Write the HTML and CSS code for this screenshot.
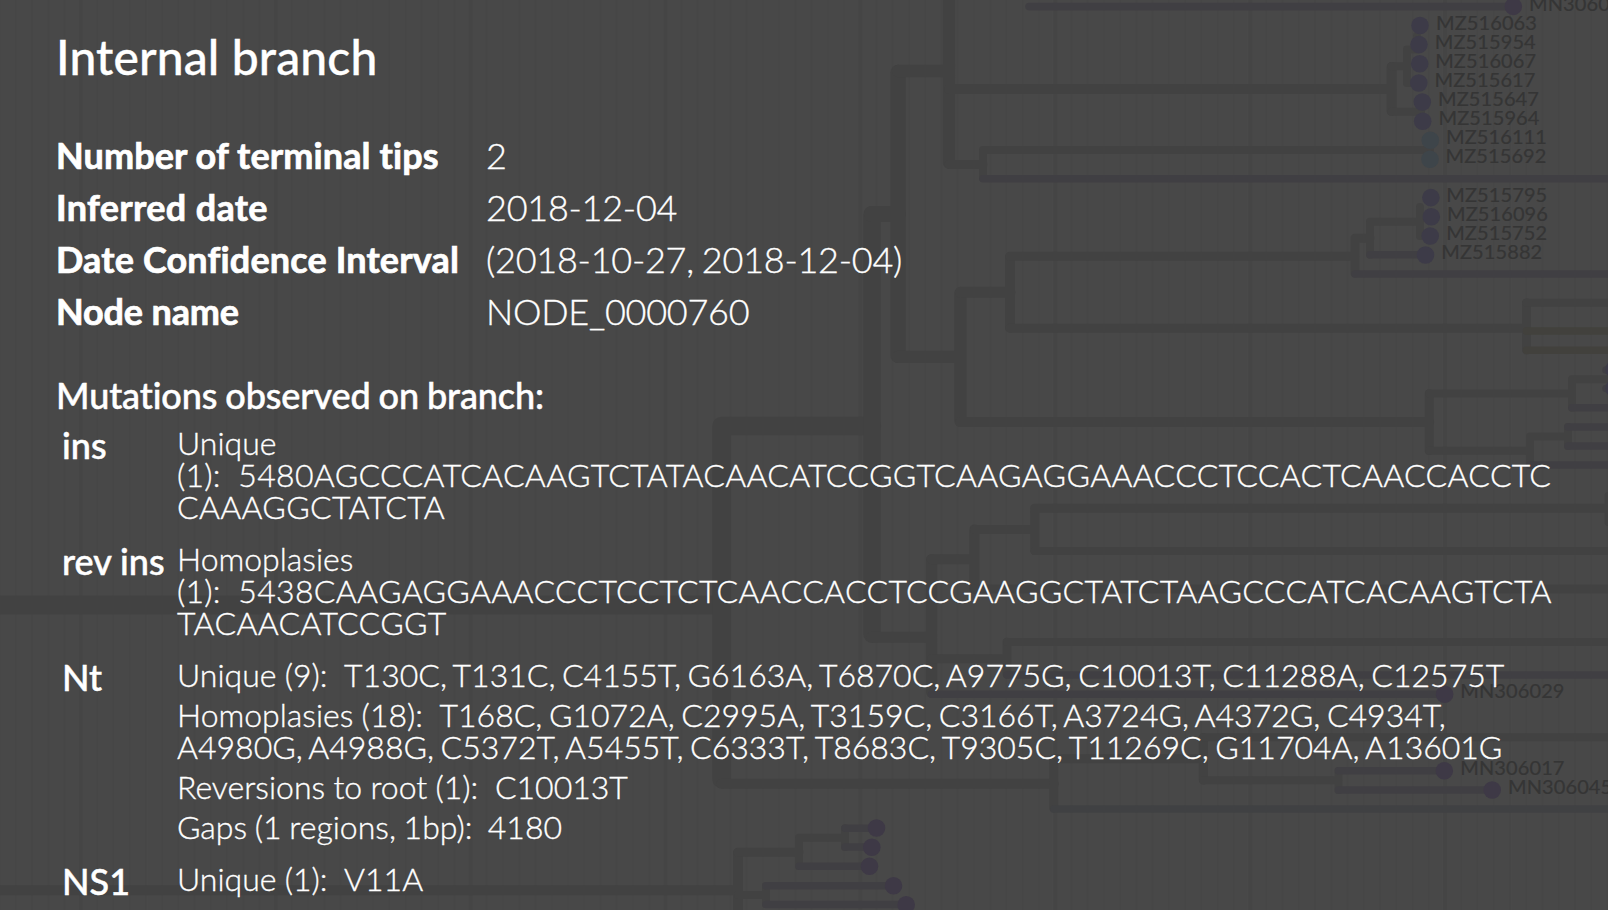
FILE: index.html
```html
<!DOCTYPE html>
<html lang="en">
<head>
<meta charset="utf-8">
<title>Internal branch</title>
<link rel="stylesheet" href="styles.css">
</head>
<body>
<svg class="tree" viewBox="0 0 1608 910" aria-hidden="true">
  <defs>
    <pattern id="grid" x="80.8" y="0" width="194.9" height="910" patternUnits="userSpaceOnUse">
      <path class="minor" d="M16.2 0V910M32.5 0V910M48.7 0V910M65 0V910M81.2 0V910M97.4 0V910M113.7 0V910M129.9 0V910M146.2 0V910M162.4 0V910M178.7 0V910"/>
      <path class="major" d="M0 0V910M194.9 0V910"/>
    </pattern>
  </defs>
  <rect width="1608" height="910" fill="url(#grid)"/>
  <g class="branch">
    <path stroke-width="19" d="M-10 605H721.5"/>
    <path stroke-width="18.5" d="M721.5 426V779M721.5 426H872"/>
    <path stroke-width="17.5" d="M872 214.7V634"/>
    <path stroke-width="16" d="M872 214H898"/>
    <path stroke-width="15.3" d="M898 72.3V355.4"/>
    <path stroke-width="12.3" d="M898 71H949M898 356.8H960.4M949 -10V162.7M960.4 293.3V420.8"/>
    <path stroke-width="11" d="M872 637.2H931.6M931.6 559.7V692.3M960.4 292.3H1010"/>
    <path stroke-width="10" d="M949 89H1391.6M960.4 422H1429.2M1010 257V327.5M931.6 559.3H974.4M974.4 529.6V589M721.5 783.7H1053.7M738 853V930M-10 890.3H738M1391.6 67V111"/>
    <path stroke-width="9" d="M949 164.4H983M1010 256.2H1355M1010 328.3H1526.5M1355 238.2V273M1355 238.2H1370M974.4 529.5H1034.7M974.4 589H1620M931.6 658.7H1007M1034.7 508.3V550.5M1034.7 508.3H1608M1053.7 758.8V808M1053.7 758.8H1203.3M1203.3 737.5V780M1526.5 303V350M1429.2 393.7V450.5M738 852.3H799M1007 642.2V674"/>
    <path stroke-width="8" d="M983 150V178M983 150H1430M1370 221.7V254.8M1370 221.7H1420M1420 207V236M1391.6 66.3H1407M1391.6 111.7H1421M1407 49.5V83H1418M1407 49.5H1417M1417 36V45M1526.5 302.7H1620M1429.2 393.5H1572M1429.2 450.7H1530M1572 379.3V407.7M1572 379.3H1606M1530 436.5V465M1530 436.5H1568M1568 427V446M1034.7 551H1620M1608.5 496V522M1007 642H1620M1203.3 737.3H1620M1203.3 780.3H1338.5M1338.5 771V790M799 837.8V866M799 837.8H845M845 828.3V847M738 895H766M766 886V904"/>
  </g>
  <path class="branch violet" d="M1029 6.6H1513M983 178.7H1620M1355 274H1620M1370 254.8H1425M1572 407.7H1620M1568 427H1620M1568 446H1620M1530 465H1620M1606 370H1620M1606 388.5H1620M931.6 694.3H1444M1007 675H1620M1338.5 770.8H1444M1338.5 790H1492M799 866.3H868M845 828.3H876M845 847H871M766 885.7H893M766 904.5H906"/>
  <path class="branch olive" d="M1526.5 331H1620M1526.5 350.3H1620"/>
  <path class="branch blue" d="M1053.7 809H1620"/>
  <g class="tip-indigo">
    <circle cx="1420" cy="25.5" r="8.8"/><circle cx="1419" cy="44.6" r="8.8"/><circle cx="1419.7" cy="63.8" r="8.8"/><circle cx="1418.8" cy="83" r="8.8"/><circle cx="1422.3" cy="102" r="8.8"/><circle cx="1422.7" cy="121.2" r="8.8"/>
    <circle cx="1430.9" cy="197.6" r="8.8"/><circle cx="1431.3" cy="216.8" r="8.8"/><circle cx="1430.2" cy="236" r="8.8"/><circle cx="1425.5" cy="255" r="8.8"/>
    <circle cx="1614" cy="369.4" r="8.8"/><circle cx="1614" cy="388.4" r="8.8"/>
  </g>
  <g class="tip-teal"><circle cx="1430.3" cy="140.2" r="8.8"/><circle cx="1430" cy="159.3" r="8.8"/></g>
  <g class="tip-purple">
    <circle cx="1513.3" cy="6.4" r="8.8"/><circle cx="1444.6" cy="694.3" r="8.8"/><circle cx="1444.3" cy="770.8" r="8.8"/><circle cx="1492.2" cy="790" r="8.8"/>
    <circle cx="876.5" cy="828" r="8.8"/><circle cx="871.8" cy="847.2" r="8.8"/><circle cx="869.5" cy="866.3" r="8.8"/><circle cx="893.5" cy="885.7" r="8.8"/><circle cx="906.2" cy="904.7" r="8.8"/>
  </g>
  <g class="tip-label">
    <text x="1529" y="11">MN306013</text>
    <text x="1436" y="30">MZ516063</text><text x="1434.8" y="49">MZ515954</text><text x="1435.2" y="68">MZ516067</text><text x="1434.5" y="87">MZ515617</text><text x="1438" y="106">MZ515647</text><text x="1438.5" y="125">MZ515964</text><text x="1446" y="144">MZ516111</text><text x="1445.5" y="163">MZ515692</text>
    <text x="1446.3" y="202">MZ515795</text><text x="1447" y="221">MZ516096</text><text x="1446.2" y="240">MZ515752</text><text x="1441.3" y="259">MZ515882</text>
    <text x="1460.3" y="698">MN306029</text><text x="1460.3" y="775">MN306017</text><text x="1508" y="794">MN306045</text>
  </g>
</svg>

<main class="panel">
  <h1 class="title">Internal branch</h1>
  <dl class="facts">
    <dt>Number of terminal tips</dt><dd>2</dd>
    <dt class="loose">Inferred date</dt><dd>2018-12-04</dd>
    <dt class="wide">Date Confidence Interval</dt><dd>(2018-10-27, 2018-12-04)</dd>
    <dt class="tight">Node name</dt><dd>NODE_0000760</dd>
  </dl>
  <h2 class="subtitle">Mutations observed on branch:</h2>
  <div class="mutations">
    <div class="gene">ins</div>
    <div class="changes">
      <p>Unique<br><span class="count">(1):&nbsp; </span><span class="seq">5480AGCCCATCACAAGTCTATACAACATCCGGTCAAGAGGAAACCCTCCACTCAACCACCTC<br>CAAAGGCTATCTA</span></p>
    </div>
    <div class="gene">rev ins</div>
    <div class="changes">
      <p>Homoplasies<br><span class="count">(1):&nbsp; </span><span class="seq">5438CAAGAGGAAACCCTCCTCTCAACCACCTCCGAAGGCTATCTAAGCCCATCACAAGTCTA<br>TACAACATCCGGT</span></p>
    </div>
    <div class="gene">Nt</div>
    <div class="changes">
      <p><span class="label">Unique (9):&nbsp; </span><span class="list">T130C, T131C, C4155T, G6163A, T6870C, A9775G, C10013T, C11288A, C12575T</span></p>
      <p><span class="label">Homoplasies (18):&nbsp; </span><span class="list">T168C, G1072A, C2995A, T3159C, C3166T, A3724G, A4372G, C4934T,<br>A4980G, A4988G, C5372T, A5455T, C6333T, T8683C, T9305C, T11269C, G11704A, A13601G</span></p>
      <p><span class="label">Reversions to root (1):&nbsp; </span>C10013T</p>
      <p><span class="gaps">Gaps (1 regions, 1bp):&nbsp; </span>4180</p>
    </div>
    <div class="gene">NS1</div>
    <div class="changes">
      <p><span class="label">Unique (1):&nbsp; </span>V11A</p>
    </div>
  </div>
</main>
</body>
</html>
```
FILE: styles.css
```css
* { box-sizing: border-box; }

body {
  margin: 0;
  height: 910px;
  overflow: hidden;
  position: relative;
  background: #484848;
  color: #fff;
  font-family: Lato, "Open Sans", sans-serif;
  font-weight: 300;
}

.tree {
  position: absolute;
  inset: 0;
  width: 1608px;
  height: 910px;
}

.minor { stroke: #464646; stroke-width: 2; }
.major { stroke: #454545; stroke-width: 4; }

.branch {
  fill: none;
  stroke: #424242;
  stroke-linecap: round;
  stroke-linejoin: round;
}
.violet { stroke: #403f43; stroke-width: 7.6; }
.olive { stroke: #42413d; stroke-width: 7.6; }
.blue { stroke: #404143; stroke-width: 7.6; }

.tip-indigo { fill: #3d3b48; }
.tip-teal { fill: #3e454a; }
.tip-purple { fill: #3e3946; }
.tip-label {
  fill: #353535;
  font-size: 20px;
  font-weight: 400;
  letter-spacing: 0.1px;
  stroke: #353535;
  stroke-width: 0.2px;
}

.panel {
  position: relative;
  padding: 28px 0 0 56px;
  white-space: nowrap;
  -webkit-text-stroke: 0.35px #fff;
}

.title {
  margin: 0;
  font-size: 48px;
  line-height: 58px;
  font-weight: 500;
  letter-spacing: 0.14px;
}

.facts {
  margin: 43px 0 0;
  display: grid;
  grid-template-columns: 430px auto;
  justify-content: start;
  grid-auto-rows: 52px;
  font-size: 36px;
  line-height: 52px;
}
.facts dt {
  font-weight: 700;
  letter-spacing: 0.1px;
  -webkit-text-stroke-width: 0.7px;
}
.facts .loose { letter-spacing: 0.32px; }
.facts .wide { letter-spacing: 0.15px; }
.facts .tight { letter-spacing: -0.15px; }
.facts dd {
  margin: 0;
  letter-spacing: -0.25px;
  word-spacing: -1.5px;
}

.subtitle {
  margin: 36px 0 0;
  font-size: 36px;
  line-height: 44px;
  font-weight: 500;
  letter-spacing: -0.1px;
  word-spacing: -1px;
  -webkit-text-stroke-width: 0.5px;
}

.mutations {
  margin-top: 6px;
  padding-left: 6px;
  display: grid;
  grid-template-columns: 115px auto;
  row-gap: 12px;
  justify-content: start;
}
.gene {
  font-size: 36px;
  line-height: 44px;
  font-weight: 500;
  -webkit-text-stroke-width: 0.5px;
}
.changes { font-size: 32px; line-height: 32px; }
.changes p { margin: 0; padding: 4px 0; }
.count { letter-spacing: 0.2px; }
.seq { letter-spacing: 0.32px; }
.list { word-spacing: -2.1px; }
.label { word-spacing: -0.4px; }
.gaps { word-spacing: -1px; }
```
